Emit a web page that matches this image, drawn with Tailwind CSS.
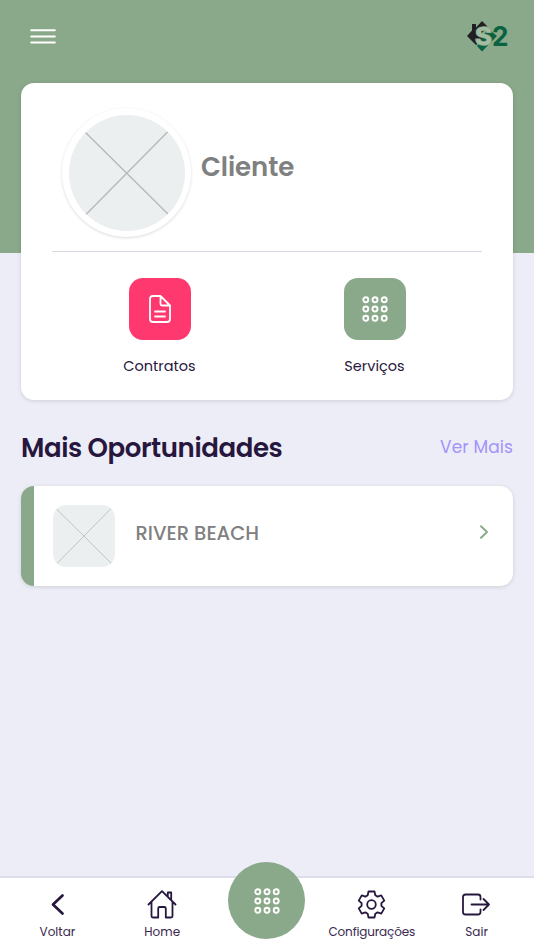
<!DOCTYPE html>
<html lang="pt-BR">
<head>
    <meta charset="UTF-8">
    <meta name="viewport" content="width=device-width, initial-scale=1.0">
    <title>Cliente</title>
    <script src="https://cdn.jsdelivr.net/npm/@tailwindcss/browser@4"></script>
</head>
<body class="bg-[#ecedf6] font-['Poppins','Inter',sans-serif] text-[#27173e] h-screen flex flex-col overflow-hidden">

    <!-- Header -->
    <header class="bg-[#8aa88a] h-[253px] shrink-0 pl-[30px] pr-[25px] pt-5">
        <div class="flex justify-between items-center h-8">
            <svg class="w-[26px] h-4" viewBox="0 0 26 16" stroke="#fff" stroke-width="2" stroke-linecap="round">
                <path d="M1.200 2.200h23.600M1.200 8.400h23.600M1.200 14.600h23.600"/>
            </svg>
            <svg class="w-[42px] h-8 overflow-visible" viewBox="0 0 42 32" font-family="Inter, sans-serif" font-weight="700">
                <path d="M0 16 5 10.500V4h4v3.500L15 1l5.500 5.500L13 15l3 5-7 5z" fill="#231f20"/>
                <path d="M21 8.500 30 16 15 31.500 10 26 17 15z" fill="#0a6240"/>
                <text x="8" y="24.500" font-size="24" textLength="17" lengthAdjust="spacingAndGlyphs" fill="#a3bda3" stroke="#8aa88a" stroke-width="1.5" paint-order="stroke">S</text>
                <text x="25" y="25.500" font-size="27" textLength="16.500" lengthAdjust="spacingAndGlyphs" fill="#0a6240" stroke="#8aa88a" stroke-width="1" paint-order="stroke">2</text>
            </svg>
        </div>
    </header>

    <main class="flex-1 px-[21px] -mt-[170px]">
        <!-- Client card -->
        <section class="bg-white rounded-[13px] h-[317px] px-[31px] pt-[25px] shadow-[0_1px_4px_rgba(0,0,0,0.13)]">
            <div class="flex items-center h-[143.5px] pl-[10px] pb-[13px] border-b border-[#d8d8e3]">
                <div class="size-[129px] rounded-full p-[6.5px] bg-white shadow-[0_1px_3px_rgba(0,0,0,0.14)]">
                    <svg class="size-[116px] rounded-full bg-[#ebeff0]" viewBox="0 0 116 116" fill="none" stroke="#bababa" stroke-width="1.5">
                        <path d="M16.500 17.500 99 99M98.500 17 17 99.500"/>
                    </svg>
                </div>
                <h1 class="ml-[10px] pb-[11px] text-[26px] font-semibold text-[#808080] tracking-[-0.1px]">Cliente</h1>
            </div>
            <div class="grid grid-cols-2 pt-[26px]">
                <a class="flex flex-col items-center">
                    <span class="size-[62px] rounded-[14px] bg-[#ff396f] flex items-center justify-center">
                        <svg class="size-7" viewBox="0 0 28 28" fill="none" stroke="#fff" stroke-width="1.8" stroke-linecap="round" stroke-linejoin="round">
                            <path d="M14.500 1H7Q4 1 4 4v20q0 3 3 3h14q3 0 3-3V10.500L14.500 1V9q0 1.500 1.500 1.500h8M9 16.500h10M9 21.500h10"/>
                        </svg>
                    </span>
                    <span class="mt-[15px] text-[14.5px] leading-[22px]">Contratos</span>
                </a>
                <a class="flex flex-col items-center">
                    <span class="size-[62px] rounded-[14px] bg-[#8aa88a] flex items-center justify-center">
                        <svg class="size-[26px]" viewBox="0 0 26 26" fill="none" stroke="#fff" stroke-width="1.9">
                            <circle cx="3.800" cy="3.800" r="2.500"/><circle cx="13" cy="3.800" r="2.500"/><circle cx="22.200" cy="3.800" r="2.500"/>
                            <circle cx="3.800" cy="13" r="2.500"/><circle cx="13" cy="13" r="2.500"/><circle cx="22.200" cy="13" r="2.500"/>
                            <circle cx="3.800" cy="22.200" r="2.500"/><circle cx="13" cy="22.200" r="2.500"/><circle cx="22.200" cy="22.200" r="2.500"/>
                        </svg>
                    </span>
                    <span class="mt-[15px] text-[14.5px] leading-[22px]">Serviços</span>
                </a>
            </div>
        </section>

        <!-- Opportunities -->
        <div class="flex justify-between items-center mt-[28px] h-10">
            <h2 class="text-[26px] font-semibold tracking-[-0.4px] whitespace-nowrap">Mais Oportunidades</h2>
            <a class="text-[17px] tracking-[0.1px] text-[#a393fa] whitespace-nowrap">Ver Mais</a>
        </div>
        <a class="mt-[17.5px] h-[100px] bg-white rounded-[13px] border-l-[13px] border-[#8aa88a] flex items-center pl-[19px] pr-[23px] shadow-[0_1px_4px_rgba(0,0,0,0.13)]">
            <svg class="size-[62px] rounded-[13px] bg-[#ebeff0]" viewBox="0 0 62 62" fill="none" stroke="#c0c3c3" stroke-width="1">
                <path d="M3.500 4 58.500 58.500M58 3.500 4 58.500"/>
            </svg>
            <span class="ml-[20.5px] pb-[4px] text-[19.5px] font-medium text-[#808080]">RIVER BEACH</span>
            <svg class="ml-auto mb-[7px] w-3 h-[14px]" viewBox="0 0 12 14" fill="none" stroke="#8aa88a" stroke-width="1.9" stroke-linecap="round" stroke-linejoin="round">
                <path d="M3 1.200 9 7l-6 5.800"/>
            </svg>
        </a>
    </main>

    <!-- Bottom menu -->
    <nav class="h-[74px] shrink-0 bg-white border-t-2 border-[#dedeea] px-[5px] grid grid-cols-5 text-[12px] leading-[18px] text-[#39294f]">
        <a class="flex flex-col items-center pt-[12px]">
            <svg class="size-[30px]" viewBox="-0.500 0 30 30" fill="none" stroke="#27173e" stroke-width="2.700" stroke-linecap="round" stroke-linejoin="round">
                <path d="M20 5.500 10.500 14.500 20 23.500"/>
            </svg>
            <span class="mt-[3px]">Voltar</span>
        </a>
        <a class="flex flex-col items-center pt-[12px]">
            <svg class="size-[30px]" viewBox="0 0 30 30" fill="none" stroke="#27173e" stroke-width="1.8" stroke-linecap="round" stroke-linejoin="round">
                <path d="M1.500 14.500 15 1.200 28.500 14.500M4.500 12v14q0 1.500 1.500 1.500h5.200V18.500q0-1.500 1.500-1.500h4.600q1.500 0 1.500 1.500v9H24q1.500 0 1.500-1.500V12M20.800 6.500V2.500h3.400v7"/>
            </svg>
            <span class="mt-[3px]">Home</span>
        </a>
        <a class="flex justify-center">
            <span class="size-[77px] shrink-0 -mt-[16px] rounded-full bg-[#8aa88a] flex items-center justify-center">
                <svg class="size-[26px]" viewBox="0 0 26 26" fill="none" stroke="#fff" stroke-width="1.9">
                    <circle cx="3.800" cy="3.800" r="2.500"/><circle cx="13" cy="3.800" r="2.500"/><circle cx="22.200" cy="3.800" r="2.500"/>
                    <circle cx="3.800" cy="13" r="2.500"/><circle cx="13" cy="13" r="2.500"/><circle cx="22.200" cy="13" r="2.500"/>
                    <circle cx="3.800" cy="22.200" r="2.500"/><circle cx="13" cy="22.200" r="2.500"/><circle cx="22.200" cy="22.200" r="2.500"/>
                </svg>
            </span>
        </a>
        <a class="flex flex-col items-center pt-[12px]">
            <svg class="size-[30px]" viewBox="-0.500 -0.500 30 30" fill="none" stroke="#27173e" stroke-width="1.8" stroke-linejoin="round">
                <path d="M10.200 4.800 11 1h6l.8 3.800 2.270 1.300 3.690-1.200 3 5.200-2.890 2.600v2.600l2.890 2.600-3 5.200-3.690-1.200-2.270 1.300L17 27h-6l-.8-3.800-2.270-1.300-3.690 1.200-3-5.200 2.890-2.600v-2.600l-2.890-2.600 3-5.200 3.690 1.200z"/>
                <circle cx="14" cy="14" r="4.300"/>
            </svg>
            <span class="mt-[3px] tracking-[-0.15px]">Configurações</span>
        </a>
        <a class="flex flex-col items-center pt-[12px]">
            <svg class="size-[30px]" viewBox="1 0.500 30 30" fill="none" stroke="#27173e" stroke-width="1.8" stroke-linecap="round" stroke-linejoin="round">
                <path d="M19.500 10V7.500Q19.500 5 17 5H4.500Q2 5 2 7.500v15Q2 25 4.500 25H17q2.500 0 2.500-2.500V20M10.500 15H28M22.500 9.500 28 15l-5.500 5.500"/>
            </svg>
            <span class="mt-[3px]">Sair</span>
        </a>
    </nav>

</body>
</html>
